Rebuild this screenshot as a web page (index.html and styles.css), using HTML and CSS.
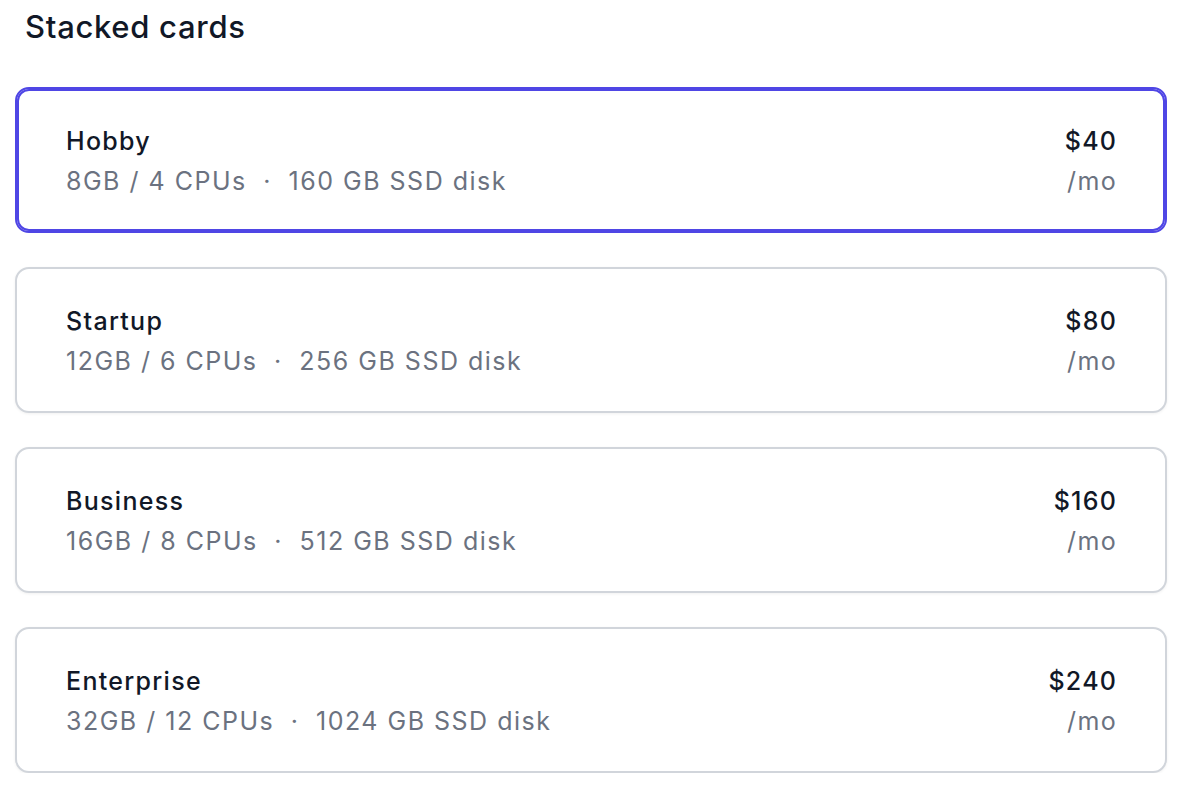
FILE: index.html
```html
<!DOCTYPE html>
<html lang="en">
<head>
<meta charset="utf-8">
<title>Stacked cards</title>
<link rel="stylesheet" href="styles.css">
</head>
<body>
<main class="page">
  <h2 class="title">Stacked cards</h2>
  <div class="cards" role="radiogroup">
    <label class="card card-selected">
      <span class="info">
        <span class="name">Hobby</span>
        <span class="specs"><span>8GB / 4 CPUs</span> <span class="dot">&middot;</span> <span>160 GB SSD disk</span></span>
      </span>
      <span class="price">
        <span class="amount">$40</span>
        <span class="per">/mo</span>
      </span>
    </label>
    <label class="card">
      <span class="info">
        <span class="name">Startup</span>
        <span class="specs"><span>12GB / 6 CPUs</span> <span class="dot">&middot;</span> <span>256 GB SSD disk</span></span>
      </span>
      <span class="price">
        <span class="amount">$80</span>
        <span class="per">/mo</span>
      </span>
    </label>
    <label class="card">
      <span class="info">
        <span class="name">Business</span>
        <span class="specs"><span>16GB / 8 CPUs</span> <span class="dot">&middot;</span> <span>512 GB SSD disk</span></span>
      </span>
      <span class="price">
        <span class="amount">$160</span>
        <span class="per">/mo</span>
      </span>
    </label>
    <label class="card">
      <span class="info">
        <span class="name">Enterprise</span>
        <span class="specs"><span>32GB / 12 CPUs</span> <span class="dot">&middot;</span> <span>1024 GB SSD disk</span></span>
      </span>
      <span class="price">
        <span class="amount">$240</span>
        <span class="per">/mo</span>
      </span>
    </label>
  </div>
</main>
</body>
</html>
```
FILE: styles.css
```css
* { box-sizing: border-box; }
html, body { margin: 0; padding: 0; background: #ffffff; }
body {
  font-family: Inter, "Noto Sans", sans-serif;
  color: #111827;
}
.page {
  padding: 7px 19px 0 15px;
}
.title {
  margin: 0 0 40px 10px;
  font-size: 31px;
  line-height: 40px;
  font-weight: 500;
  letter-spacing: 0.7px;
  color: #111827;
}
.cards {
  display: flex;
  flex-direction: column;
  gap: 34px;
}
.card {
  display: flex;
  justify-content: space-between;
  align-items: flex-start;
  border: 2px solid #d1d5db;
  border-radius: 14px;
  padding: 32px 49px 30px 49px;
  background: #ffffff;
  box-shadow: 0 1px 3px rgba(0, 0, 0, 0.06);
  font-size: 25px;
  line-height: 40px;
  letter-spacing: 1.3px;
}
.card-selected {
  border-color: #4f46e5;
  box-shadow: inset 0 0 0 2px #4f46e5;
}
.info, .price {
  display: flex;
  flex-direction: column;
}
.price { align-items: flex-end; }
.price span { margin-right: -1.3px; }
.name, .amount {
  font-weight: 500;
  color: #111827;
}
.specs, .per {
  color: #6b7280;
  font-weight: 400;
  letter-spacing: 1.5px;
}
.dot { margin: 0 8px; }
```
